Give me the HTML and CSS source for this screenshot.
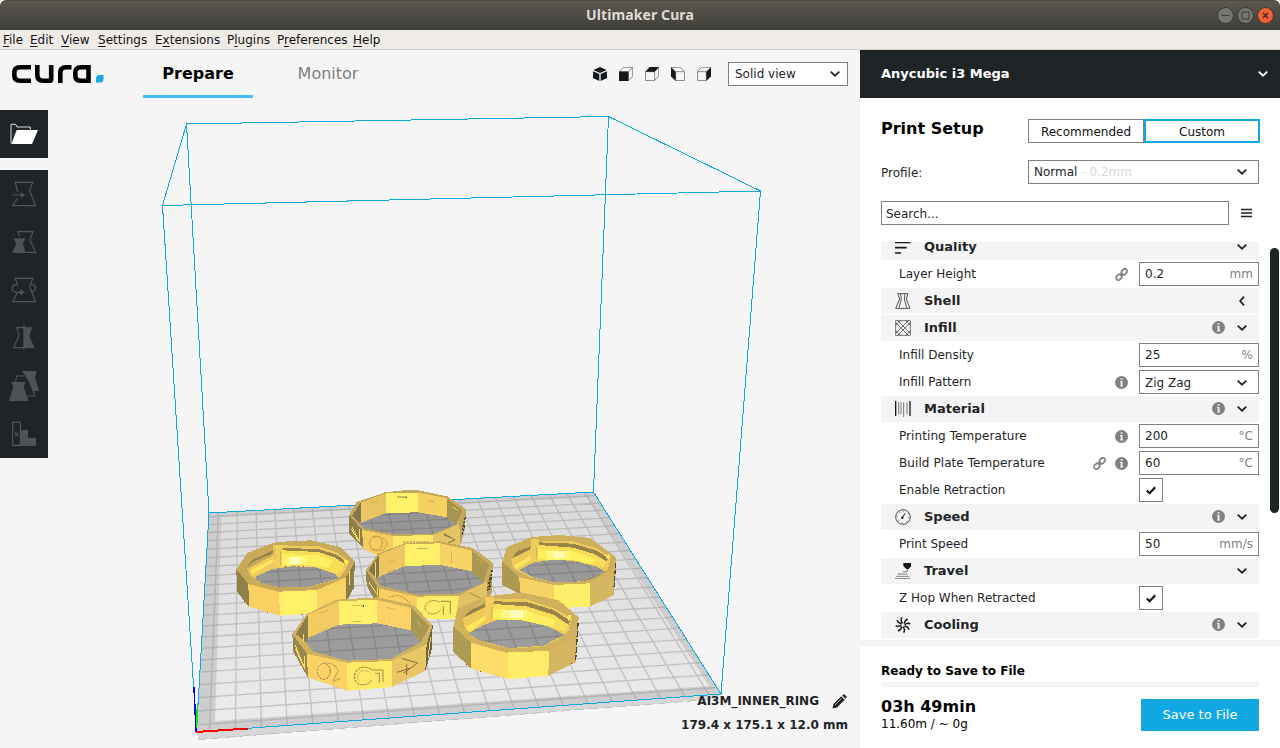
FILE: index.html
```html
<!DOCTYPE html>
<html lang="en">
<head>
<meta charset="utf-8">
<title>Ultimaker Cura</title>
<link rel="stylesheet" href="styles.css">
</head>
<body>
<svg class="defs" width="0" height="0">
  <symbol id="down" viewBox="0 0 10 6"><path d="M.7 .7 5 4.7 9.3 .7" fill="none" stroke="currentColor" stroke-width="1.8"/></symbol>
  <symbol id="left" viewBox="0 0 6 10"><path d="M5 .7 1.2 5 5 9.3" fill="none" stroke="currentColor" stroke-width="1.8"/></symbol>
  <symbol id="info" viewBox="0 0 13 13"><circle cx="6.5" cy="6.5" r="6.5" fill="#808080"/><path d="M5.600 2.200h1.900v1.600H5.600zM5 5h2.500v4.500h.7v1H5v-1h.7V6H5z" fill="#f4f4f4"/></symbol>
  <symbol id="link" viewBox="0 0 13 13"><g fill="none" stroke="#808080" stroke-width="1.700"><rect x="-3.200" y="-2.300" width="6.400" height="4.600" rx="2.300" transform="translate(4 9.200) rotate(-45)"/><rect x="-3.200" y="-2.300" width="6.400" height="4.600" rx="2.300" transform="translate(9.200 3.800) rotate(-45)"/><path d="M5 8 8 5"/></g></symbol>
  <symbol id="check" viewBox="0 0 10 9"><path d="M.8 4.600 3.600 7.200 9.200 1.200" fill="none" stroke="#111517" stroke-width="2.100"/></symbol>
</svg>
<div class="window">
  <header class="titlebar">
    <h1>Ultimaker Cura</h1>
    <div class="controls">
      <svg width="17" height="17" viewBox="0 0 17 17"><circle cx="8.500" cy="8.500" r="8" fill="#767570" stroke="#363530"/><path d="M4.500 8.500h8" stroke="#3c3b37"/></svg>
      <svg width="17" height="17" viewBox="0 0 17 17"><circle cx="8.500" cy="8.500" r="8" fill="#767570" stroke="#363530"/><path d="M5 5h7v7H5z" fill="none" stroke="#3c3b37"/></svg>
      <svg width="17" height="17" viewBox="0 0 17 17"><circle cx="8.500" cy="8.500" r="8" fill="#ee6038" stroke="#45352d"/><path d="m6 6 5 5m0-5-5 5" stroke="#3c2a22" stroke-width="1.400"/></svg>
    </div>
  </header>
  <nav class="menubar">
    <span><u>F</u>ile</span><span><u>E</u>dit</span><span><u>V</u>iew</span><span><u>S</u>ettings</span><span>E<u>x</u>tensions</span><span>P<u>l</u>ugins</span><span>P<u>r</u>eferences</span><span><u>H</u>elp</span>
  </nav>
  <div class="body">
    <main class="stage">
      <svg class="scene" width="860" height="698" viewBox="0 50 860 698">
        <g shape-rendering="crispEdges">
          <path d="M196.500 732 198.500 740 716 699 721 694Z" fill="#d7d7d7"/>
          <path d="M198.500 739.500 716 699" stroke="#c2c2c2" stroke-dasharray="9 5" fill="none"/>
          <path d="M209 513 593 492 721 694 196 732Z" fill="#cdcdcd"/>
        </g>
        <linearGradient id="plate" x1="0" y1="0" x2="0" y2="1"><stop offset="0" stop-color="#dadada"/><stop offset="1" stop-color="#ebebeb"/></linearGradient>
        <path d="M221.500 517 587 497.500 709 686 215 721Z" fill="url(#plate)"/>
        <g id="grid" fill="none" stroke="#8a8a8a" stroke-opacity=".4" stroke-width="1.300"></g>
        <path d="M186.500 124 608.500 116.500 760.500 191 162.500 205.500ZM196.500 732 162.500 205.500M721 694 760.500 191M593.500 492 608.500 116.500M209 513 186.500 124M209 513 593.500 492 721 694 196.500 732Z" fill="none" stroke="#0ea7e0" shape-rendering="crispEdges"/>
        <g shape-rendering="crispEdges" stroke-width="2"><path d="M196 732 194 687" stroke="#00f" stroke-width="1.500"/><path d="M196.500 728 197.500 703" stroke="#0e0" stroke-width="1.500"/><path d="M196 732 248 728.500" stroke="#f00"/></g>

        <!-- back ring -->
        <g transform="translate(340 480) scale(.33333)" shape-rendering="crispEdges">
          <path fill-rule="evenodd" d="M28 105 50 66 135 37 190 31 235 31 322 49 378 88 358 135 280 168 160 169 66 150ZM54 126 64 128 138 99 235 97 320 112 348 134 280 161 160 162 72 145Z" fill="#c5a859"/>
          <path d="M54 126 64 128 138 99 235 97 320 112 348 134 280 161 160 162 72 145Z" class="shade"/>
          <path d="M36 108 62 68 64 126 52 124Z" fill="#85774c"/>
          <path d="M62 68 138 40V99L64 128Z" fill="#e9c460"/>
          <path d="M138 40 235 38V97L138 99Z" fill="#fff269"/>
          <path d="M235 38 320 54V112L235 97Z" fill="#f5d164"/>
          <path d="M320 54 368 93 348 133 320 112Z" fill="#a69452"/>
          <path d="M28 105 66 150 70 205 28 160Z" fill="#8c7d4b"/>
          <path d="M66 150 160 168V225H108L70 206Z" fill="#f6cd60"/>
          <path d="M160 168 280 165V225H160Z" fill="#ffe968"/>
          <path d="M280 165 358 132 362 195 280 215Z" fill="#e5c464"/>
          <path d="M358 132 378 88 374 150 362 195Z" fill="#bda25a"/>
          <path d="m36 140 22 45V148M34 148l22 36" stroke="#f6db65" stroke-width="3" fill="none"/>
          <path d="m376 112-10 42m8-18-8 30" stroke="#514930" stroke-width="4" stroke-dasharray="7 4" fill="none"/>
          <path d="M92 69 110 63M170 51h32M264 62l21 5M338 81l17 11" stroke="#d6b559" stroke-width="4" fill="none"/>
          <g shape-rendering="auto" fill="none" stroke="#c9a24f" stroke-width="3"><ellipse cx="108" cy="189" rx="19" ry="21" stroke="#8d7940" stroke-dasharray="4 3"/><path d="M100 172q30-8 43 20l-14 20M92 205q16 12 36 4"/><path d="m310 160 35 20-20 8M312 165l22 8" stroke="#84703e"/><path d="M190 186h75" stroke="#7d6c3a" stroke-dasharray="5 5"/></g>
          <path d="M199 50v4M291 108v3" stroke="#533" stroke-width="3"/>
        </g>

        <!-- left ring -->
        <g transform="translate(225 480) scale(.33333)" shape-rendering="crispEdges">
          <path fill-rule="evenodd" d="M34 268 68 218 153 186 258 181 345 201 390 245 363 300 277 335 162 338 70 316ZM88 292 140 268 200 259 270 262 330 281 340 296 250 320 160 321 108 308Z" fill="#c8aa5a"/>
          <path fill-rule="evenodd" d="M66 265 82 240 145 210V197H172L280 199 335 218 372 245 358 277 338 298 250 320 160 322 108 308 76 285ZM88 292 140 268 200 259 270 262 330 281 340 296 250 320 160 321 108 308Z" fill="#f0ca5c"/>
          <path d="M66 262 82 240 145 210V221L80 250ZM172 204 280 207 335 224 366 246 360 252 330 233 280 216 172 211Z" fill="#99844a"/>
          <path d="M172 196 280 199 335 217V224L280 207 172 204Z" fill="#edcb5c"/>
          <path d="M66 264 80 248 145 219V225L70 266Z" fill="#c7a857"/>
          <path d="M172 211 280 216 330 233 358 252 352 272 335 282 270 262 200 256 172 260Z" fill="#f6df57"/>
          <path d="M172 222 280 226 325 244 310 264 245 254 172 258Z" fill="#fff05e"/>
          <path d="M182 230h60v24h-60Z" fill="#fff67c"/><path d="M196 230h30v22h-30Z" fill="#fffcb4"/>
          <path d="M77 270 145 236V245L82 284Z" fill="#ffe65c"/>
          <path d="M148 195h26v12l-8 10 4 45h-20Z" fill="#f0cf5d"/><path d="M148 205v22M168 216v38" stroke="#d9b455" stroke-width="3"/>
          <path d="M88 292 140 268 200 259 270 262 330 281 340 296 250 320 160 321 108 308Z" class="shade"/>
          <path d="m356 242 14-4v12l-10 5Z" fill="#ffeb60"/>
          <path d="M34 268 70 312 72 380 36 335Z" fill="#918149"/>
          <path d="M70 312 162 335 165 407 72 380Z" fill="#fbd062"/>
          <path d="M162 335 277 330V400L165 407Z" fill="#fff067"/>
          <path d="M277 330 363 292V380L277 400Z" fill="#fad463"/>
          <path d="M363 292 390 245 386 325 363 368Z" fill="#8d7d49"/>
          <path d="M374 272v44" stroke="#fbe162" stroke-width="3"/>
          <path d="M58 365h3M126 398h4M228 403h4M180 261h3M218 259h4M234 259h4" stroke="#d31616" stroke-width="3"/>
        </g>

        <!-- right ring -->
        <g transform="translate(430 480) scale(.33333)" shape-rendering="crispEdges">
          <path fill-rule="evenodd" d="M217 245 230 202 305 171 390 165 480 174 559 232 550 270 480 314 372 318 268 296ZM266 270 310 248 370 239 430 243 500 260 526 276 480 300 430 306 370 306 310 292Z" fill="#cdaf5c"/>
          <path fill-rule="evenodd" d="M243 238 262 214 310 193 340 182 430 184 500 205 542 234 534 268 500 290 450 305 370 306 300 292 250 265ZM266 270 310 248 370 239 430 243 500 260 526 276 480 300 430 306 370 306 310 292Z" fill="#edc959"/>
          <path d="M243 236 262 214 304 197V207L258 229ZM325 187 430 191 500 212 538 236 530 244 490 221 430 203 325 195Z" fill="#99844a"/>
          <path d="M325 195 430 203 490 221 530 244 522 263 430 240 325 239Z" fill="#f8dc56"/>
          <path d="M325 208 430 214 500 238 490 254 430 241 325 238Z" fill="#fff05e"/><path d="M350 212h66v24h-66Z" fill="#fff67c"/><path d="M370 213h32v22h-32Z" fill="#fffcb4"/>
          <path d="M252 255 304 226V238L262 267Z" fill="#ffe35a"/><path d="M302 177h26v15l-8 10 2 40h-18Z" fill="#efcc5c"/><path d="M302 188v20M321 202v34" stroke="#d9b455" stroke-width="3"/>
          <path d="M266 270 310 248 370 239 430 243 500 260 526 276 480 300 430 306 370 306 310 292Z" class="shade"/>
          <path d="m526 226 12-4 4 12-10 4Z" fill="#ffeb60"/>
          <path d="M217 245 268 292 270 342 217 315Z" fill="#ab9851"/>
          <path d="M268 292 372 315V380L270 345Z" fill="#f7d366"/>
          <path d="M372 315 480 310V380L390 384 372 378Z" fill="#ffee69"/>
          <path d="M480 310 550 265 559 232 552 345 480 380Z" fill="#d5b660"/>
          <path d="M557 250 552 325" stroke="#514930" stroke-width="4" stroke-dasharray="14 5"/>
        </g>

        <!-- middle ring -->
        <g transform="translate(340 480) scale(.33333)" shape-rendering="crispEdges">
          <path fill-rule="evenodd" d="M78 270 115 220 197 189 300 184 398 204 458 248 440 308 358 350 232 352 116 328ZM106 295 118 290 195 258 300 255 396 274 430 309 355 341 235 344 124 318Z" fill="#c9ab5b"/>
          <path d="M106 295 118 290 195 258 300 255 396 274 430 309 355 341 235 344 124 318Z" class="shade"/>
          <path d="M86 270 118 224V288L108 294Z" fill="#85774c"/>
          <path d="M118 224 195 193V258L118 290Z" fill="#eec761"/>
          <path d="M195 193 300 190V255L195 258Z" fill="#fff06a"/>
          <path d="M300 190 396 212V274L300 255Z" fill="#f7d366"/>
          <path d="M396 212 448 255 430 308 396 274Z" fill="#aa9753"/>
          <path d="M78 270 116 325 122 390 80 318Z" fill="#968650"/>
          <path d="M116 325 232 350V412L118 390Z" fill="#fad063"/>
          <path d="M232 350 358 347 345 416 285 418 232 412Z" fill="#ffec68"/>
          <path d="M358 347 440 305 454 335 440 370 345 416Z" fill="#e3c263"/>
          <path d="M440 305 458 248 456 335 440 370Z" fill="#bda25a"/>
          <path d="m456 270-8 60m2-35-8 40" stroke="#514930" stroke-width="5" stroke-dasharray="7 4" fill="none"/>
          <path d="m86 305 28 42V322M106 245v50" stroke="#f6db65" stroke-width="3" fill="none"/>
          <path d="M143 247 166 239M143 276l23-9M230 207h34M334 220v30M410 236l22 15" stroke="#d3b055" stroke-width="3" fill="none"/>
          <g shape-rendering="auto" fill="none" stroke="#a08744" stroke-width="3"><path d="M298 366q-17-9-34 1-18 17 1 32 20 8 36-8" stroke="#82703f" stroke-dasharray="6 3"/><path d="M303 364h28v38M310 378v26"/><path d="M148 352q24-10 40 0l22 16" stroke-dasharray="5 3"/><path d="m388 338 34 17"/></g>
        </g>

        <!-- front left ring -->
        <g transform="translate(225 480) scale(.33333)" shape-rendering="crispEdges">
          <path fill-rule="evenodd" d="M202 462 245 402 335 359 460 352 565 375 623 435 605 496 500 546 365 551 247 525ZM243 486 249 474 342 434 456 430 558 451 586 487 497 537 367 542 262 514Z" fill="#d1b15e"/>
          <path d="M243 486 249 474 342 434 456 430 558 451 586 487 497 537 367 542 262 514Z" class="shade"/>
          <path d="M212 462 249 405V474L243 486Z" fill="#8d7d4b"/>
          <path d="M249 405 342 363V434L249 474Z" fill="#f2cb62"/>
          <path d="M342 363 456 360V430L342 434Z" fill="#fff16b"/>
          <path d="M456 360 558 384V451L456 430Z" fill="#fad267"/>
          <path d="M558 384 614 437 588 487 558 451Z" fill="#a99651"/>
          <path d="M202 462 247 522 248 592 205 515Z" fill="#98874e"/>
          <path d="M247 522 365 548 368 632 248 592Z" fill="#fcd265"/>
          <path d="M365 548 500 543 502 621 368 632Z" fill="#ffea68"/>
          <path d="M500 543 605 493 601 572 502 621Z" fill="#e8c764"/>
          <path d="M605 493 623 435 620 510 601 572Z" fill="#6e6342"/>
          <path d="m210 495 30 72V528M211 506l27 58M236 462v24M617 470l-8 65" stroke="#f6db65" stroke-width="3" fill="none"/>
          <path d="M282 402l26-11M282 456l26-12M382 376h34M384 424h24M482 382l28 6M493 410v8M576 424l14 16" stroke="#d9b556" stroke-width="3" fill="none"/>
          <path d="M415 375v6" stroke="#443a25" stroke-width="3"/>
          <g shape-rendering="auto" fill="none" stroke="#a48b47" stroke-width="3"><ellipse cx="296" cy="574" rx="20" ry="24" stroke="#8b773f" stroke-dasharray="7 3"/><ellipse cx="298" cy="575" rx="26" ry="28" stroke="#ffe579"/><path d="M290 550q38-7 50 22l-16 32 22-8" stroke="#c09c49"/><path d="M438 568q-22-14-42 2-18 26 4 42 26 8 40-12" stroke="#85713b" stroke-dasharray="8 3"/><path d="M433 576q-20-9-32 2-9 19 4 27" stroke="#d9b653"/><path d="M439 570h35v36M450 580h13v28"/><path d="m530 535 48 14-42 30M545 553v32M516 577l38-12" stroke="#806e3d"/></g>
        </g>

        <!-- front right ring -->
        <g transform="translate(430 480) scale(.33333)" shape-rendering="crispEdges">
          <path fill-rule="evenodd" d="M70 440 85 385 165 350 275 337 387 361 446 412 437 474 357 517 235 523 123 492ZM116 460 160 435 200 421 270 420 350 438 404 464 340 497 240 504 150 481Z" fill="#d1b15e"/>
          <path fill-rule="evenodd" d="M98 418 115 395 166 370V358H192L290 358 370 384 424 415 415 455 385 478 340 499 250 506 180 492 130 470 106 445ZM116 460 160 435 200 421 270 420 350 438 404 464 340 497 240 504 150 481Z" fill="#efca5b"/>
          <path d="M100 414 118 392 166 371V381L112 408ZM190 364 290 366 370 390 420 422 416 434 370 404 290 379 190 372Z" fill="#99844a"/>
          <path d="M190 372 290 379 370 404 416 434 406 455 350 438 270 420 190 420Z" fill="#f9dc57"/>
          <path d="M190 387 290 392 375 420 370 440 270 419 190 418Z" fill="#fff05f"/><path d="M214 390h76v25h-76Z" fill="#fff77f"/><path d="M240 391h38v22h-38Z" fill="#fffcc0"/>
          <path d="M108 440 166 407V420L120 455Z" fill="#ffe65b"/><path d="M166 350h26v18l-8 10 6 42h-24Z" fill="#f3cf5f"/><path d="M166 362v22M186 380v36" stroke="#d9b455" stroke-width="3"/>
          <path d="M116 460 160 435 200 421 270 420 350 438 404 464 340 497 240 504 150 481Z" class="shade"/>
          <path d="m410 408 14-4v16l-10 2Z" fill="#ffeb60"/>
          <path d="M70 440 123 488V566L70 515Z" fill="#ad9a53"/>
          <path d="M123 488 235 520V597L123 566Z" fill="#ffdc67"/>
          <path d="M235 517 357 513 355 587 250 597H235Z" fill="#ffed69"/>
          <path d="M357 513 437 470 446 412 437 547 355 587Z" fill="#d5b560"/>
          <path d="M444 430 437 540" stroke="#514930" stroke-width="4" stroke-dasharray="18 6"/>
          <path d="M108 553h4M150 574h4M423 550h4" stroke="#d31616" stroke-width="4"/>
        </g>
      </svg>

      <div class="topbar">
        <svg class="logo" width="92" height="20" viewBox="0 0 92 20"><g fill="none" stroke="#000" stroke-width="4.600"><path d="M19 3.300H8Q2.300 3.300 2.300 8.500v2.500q0 5.700 5.700 5.700h11"/><path d="M25.300 1v10q0 5.700 5.700 5.700h7Q39.200 16.700 39.200 15V1" /><path d="M48.300 19V9q0-5.700 5.700-5.700h5.500"/><path d="M76.500 19V3.300H69q-5.700 0-5.700 5.200v3q0 5.200 5 5.200h8"/></g><path d="M84 18.500V14.500q0-3.500 3.500-3.500H91.500V15q0 3.500-3.500 3.500Z" fill="#1ba6df"/></svg>
        <div class="tab active">Prepare</div>
        <div class="tab">Monitor</div>
        <div class="views">
          <svg viewBox="0 0 42 42"><path d="M21 0 41 9 21 18 1 9ZM0 13 19 21V42L0 33ZM42 13 23 21V42L42 33Z" fill="#15191b"/></svg>
          <svg viewBox="0 0 42 42"><path d="M1 14 14 1H41V28L29 41M29 14 41 1" fill="none" stroke="#777" stroke-width="2.500"/><path d="M0 13H29V42H0Z" fill="#15191b"/></svg>
          <svg viewBox="0 0 42 42"><path d="M1.500 14H29V40.500H1.500ZM29 14 41 1V28L29 40" fill="none" stroke="#777" stroke-width="2.500"/><path d="M1 14 14 0H42L29 14Z" fill="#15191b"/></svg>
          <svg viewBox="0 0 42 42"><path d="M14 14H40.500V40.500H14ZM1 1H28L40 14" fill="none" stroke="#777" stroke-width="2.500"/><path d="M0 0 14 14V42L0 28Z" fill="#15191b"/></svg>
          <svg viewBox="0 0 42 42"><path d="M1.500 14H28V40.500H1.500ZM1 14 14 1H42" fill="none" stroke="#777" stroke-width="2.500"/><path d="M42 0 28 14V42L42 28Z" fill="#15191b"/></svg>
        </div>
        <div class="select viewmode"><span>Solid view</span><svg class="chev"><use href="#down"/></svg></div>
      </div>

      <div class="tools">
        <div class="tool open"><svg viewBox="0 0 144 144"><path d="M33 100V43H47L51 51H91V60" fill="none" stroke="#ddd" stroke-width="3"/><path d="M50 60H114L96 102H34Z" fill="#fff"/></svg></div>
        <div class="toolset">
          <div class="tool"><svg viewBox="0 0 144 144"><path d="M53 66 46 37H98L89 62 107 107H38L53 84M37 75H65" class="ln"/><path d="M62 66 76 75 62 84Z" class="fl"/></svg></div>
          <div class="tool"><svg viewBox="0 0 144 144"><path d="M59 55 53 41H99L90 66 107 103H76" class="ln"/><path d="M41 61H76L69 77 77 105H36L49 77Z" class="fl"/></svg></div>
          <div class="tool"><svg viewBox="0 0 144 144"><path d="M53 59 46 37H98L89 62 107 107H38L53 78M52 55C31 55 31 78 49 79H63M91 55C112 53 112 77 92 77" class="ln"/><path d="M60 70 76 79 60 88Z" class="fl"/></svg></div>
          <div class="tool"><svg viewBox="0 0 144 144"><path d="M72 41H50L57 64 41 101H72M72 32V108" class="ln"/><path d="M72 40H97L88 66 104 103H72Z" class="fl"/></svg></div>
          <div class="tool"><svg viewBox="0 0 144 144"><path d="M47 60 50 42H72M82 102H104L99 83" class="ln"/><path d="M66 27H110L105 47 117 87H98L86 58ZM33 60H77L71 75 86 117H27L40 75Z" class="fl"/></svg></div>
          <div class="tool"><svg viewBox="0 0 144 144"><path d="M38 37H61V106H38ZM44 67 55 79M55 67 44 79" class="ln"/><path d="M62 60H84V84H108V108H62Z" class="fl"/></svg></div>
        </div>
      </div>

      <div class="jobinfo">
        <div class="jobname"><span>AI3M_INNER_RING</span><svg width="15" height="15" viewBox="0 0 15 15"><path d="M.5 14.500 1.500 10 9.200 2.300 12.700 5.800 5 13.500ZM10.200 1.500 11.500.400Q12 0 12.500.400L14.600 2.500Q15 3 14.500 3.500L13.500 4.800Z" fill="#1f2427"/><path d="m3 11 6.500-6.500" stroke="#f5f5f5" stroke-width=".7"/></svg></div>
        <div>179.4 x 175.1 x 12.0 mm</div>
      </div>
    </main>

    <aside class="side">
      <div class="machine"><span>Anycubic i3 Mega</span><svg class="chev"><use href="#down"/></svg></div>
      <div class="setup"><h2>Print Setup</h2><div class="modes"><span>Recommended</span><span class="on">Custom</span></div></div>
      <div class="profile"><span>Profile:</span><div class="select"><span>Normal <i>- 0.2mm</i></span><svg class="chev"><use href="#down"/></svg></div></div>
      <div class="find"><div class="field">Search...</div><svg width="11" height="10" viewBox="0 0 11 10"><path d="M0 1.500H11M0 5H11M0 8.500H11" stroke="#1f2427" stroke-width="1.700"/></svg></div>

      <div class="listwrap">
        <div class="list">
          <div class="cat"><svg class="ic" viewBox="0 0 48 48"><path d="M0 10H46M0 26H35M0 42H18" stroke="#15191b" stroke-width="5"/></svg><b>Quality</b><svg class="chev"><use href="#down"/></svg></div>
          <div class="row"><span>Layer Height</span><svg class="mark"><use href="#link"/></svg><div class="val">0.2<em>mm</em></div></div>
          <div class="cat"><svg class="ic" viewBox="0 0 48 48"><path d="M8 2H39L34 18 45 46H2L14 18ZM17 2 19 18 12 44M30 2 28 18 35 44" fill="none" stroke="#333" stroke-width="2.500"/></svg><b>Shell</b><svg class="chev side-chev"><use href="#left"/></svg></div>
          <div class="cat"><svg class="ic" viewBox="0 0 48 48"><path d="M2 2H46V46H2ZM2 16 16 2M2 40 40 2M8 46 46 8M32 46 46 32M2 32 16 46M2 8 40 46M8 2 46 40M32 2 46 16" fill="none" stroke="#444" stroke-width="2.200"/></svg><b>Infill</b><svg class="mark"><use href="#info"/></svg><svg class="chev"><use href="#down"/></svg></div>
          <div class="row"><span>Infill Density</span><div class="val">25<em>%</em></div></div>
          <div class="row"><span>Infill Pattern</span><svg class="mark"><use href="#info"/></svg><div class="val pick">Zig Zag<svg class="chev"><use href="#down"/></svg></div></div>
          <div class="cat"><svg class="ic" viewBox="0 0 48 48"><path d="M2 0V45M45 0V45" stroke="#15191b" stroke-width="4"/><path d="M11 4V40M18 4V40M26 4V48M36 4V40" stroke="#444" stroke-width="2.200"/></svg><b>Material</b><svg class="mark"><use href="#info"/></svg><svg class="chev"><use href="#down"/></svg></div>
          <div class="row wide"><span>Printing Temperature</span><svg class="mark"><use href="#info"/></svg><div class="val">200<em>°C</em></div></div>
          <div class="row wide"><span>Build Plate Temperature</span><svg class="mark"><use href="#link"/></svg><svg class="mark"><use href="#info"/></svg><div class="val">60<em>°C</em></div></div>
          <div class="row"><span>Enable Retraction</span><div class="box"><svg width="10" height="9"><use href="#check"/></svg></div></div>
          <div class="cat"><svg class="ic" viewBox="0 0 48 48"><circle cx="24" cy="24" r="22" fill="none" stroke="#333" stroke-width="2.500"/><circle cx="24" cy="24" r="18" fill="none" stroke="#333" stroke-width="4" stroke-dasharray="1.500 12.600"/><path d="M21 28 30 13" stroke="#15191b" stroke-width="3"/><circle cx="22" cy="26" r="3.500"/></svg><b>Speed</b><svg class="mark"><use href="#info"/></svg><svg class="chev"><use href="#down"/></svg></div>
          <div class="row"><span>Print Speed</span><div class="val">50<em>mm/s</em></div></div>
          <div class="cat"><svg class="ic" viewBox="0 0 48 48"><path d="M25 0H49V9L41 18H34L25 9Z" fill="#15191b"/><path d="M37 18V26H24M8 33H37M4 40H43M0 47H46" stroke="#666" stroke-width="2.500" fill="none"/></svg><b>Travel</b><svg class="chev"><use href="#down"/></svg></div>
          <div class="row"><span>Z Hop When Retracted</span><div class="box"><svg width="10" height="9"><use href="#check"/></svg></div></div>
          <div class="cat"><svg class="ic" viewBox="0 0 48 48"><g fill="none" stroke="#15191b" stroke-width="4.500"><path d="M23 19Q15 11 21 1M28 20Q29 9 38 6M29 24Q38 16 46 21M28 28Q39 28 42 38M24 29Q32 38 26 47M20 28Q19 38 9 42M19 24Q10 31 2 26M20 20Q10 20 6 10"/></g></svg><b>Cooling</b><svg class="mark"><use href="#info"/></svg><svg class="chev"><use href="#down"/></svg></div>
        </div>
        <div class="scroll"></div>
      </div>

      <footer class="save">
        <strong>Ready to Save to File</strong>
        <div class="progress"></div>
        <div class="result"><div><div class="time">03h 49min</div><div>11.60m / ~ 0g</div></div><button>Save to File</button></div>
      </footer>
    </aside>
  </div>
</div>
<script src="grid.js"></script>
</body>
</html>
```
FILE: grid.js
```js
// Build plate corners on screen: origin, x end, far corner, y end.
const [a, b, c, d] = [[196.5, 732], [721, 694], [593.5, 492], [209, 513]];

// Projective map from the unit square to the plate.
const sx = a[0] - b[0] + c[0] - d[0], sy = a[1] - b[1] + c[1] - d[1];
const dx1 = b[0] - c[0], dx2 = d[0] - c[0], dy1 = b[1] - c[1], dy2 = d[1] - c[1];
const det = dx1 * dy2 - dx2 * dy1;
const g = (sx * dy2 - dx2 * sy) / det, h = (dx1 * sy - sx * dy1) / det;
const project = (u, v) => {
  const w = g * u + h * v + 1;
  const x = (b[0] - a[0] + g * b[0]) * u + (d[0] - a[0] + h * d[0]) * v + a[0];
  const y = (b[1] - a[1] + g * b[1]) * u + (d[1] - a[1] + h * d[1]) * v + a[1];
  return (x / w).toFixed(1) + ' ' + (y / w).toFixed(1);
};

// One line every 10 mm on a 210 mm plate, centred.
let path = '';
for (let mm = 5; mm < 210; mm += 10) {
  const t = mm / 210;
  path += `M${project(t, 0)}L${project(t, 1)}M${project(0, t)}L${project(1, t)}`;
}
const line = document.createElementNS('http://www.w3.org/2000/svg', 'path');
line.setAttribute('d', path);
document.getElementById('grid').appendChild(line);
```
FILE: styles.css
```css
* { box-sizing: border-box; }
body { margin: 0; font: 12px/16px "DejaVu Sans", sans-serif; color: #1f2427; background: #fff; }
.defs { position: absolute; }
.window { width: 1280px; height: 748px; display: flex; flex-direction: column; overflow: hidden; }

.titlebar { height: 30px; flex: none; display: grid; grid-template-columns: 1fr auto 1fr; align-items: center; border-radius: 6px 6px 0 0; background: linear-gradient(#5b5850, #3f3e39); border-top: 1px solid #4b4944; }
.titlebar h1 { grid-column: 2; margin: 0; padding-bottom: 2px; font: bold 14px/20px "Noto Sans", sans-serif; letter-spacing: .1px; color: #dfdbd2; }
.controls { display: flex; gap: 3px; justify-content: flex-end; padding: 0 6px 1px 0; }

.menubar { height: 20px; flex: none; display: grid; grid-template-columns: 27px 31px 37px 57px 72px 50px 76px auto; padding: 2px 3px 0; background: #efebe7; border-bottom: 1px solid #d3cfcc; color: #111; }
.menubar u { text-underline-offset: 2px; text-decoration-thickness: 1px; }

.body { flex: 1; display: flex; min-height: 0; }
.stage { position: relative; width: 860px; display: flex; flex-direction: column; background: #f5f5f5; }
.scene { position: absolute; left: 0; top: 0; }
.shade { fill: #383838; fill-opacity: .42; }
.topbar, .tools, .jobinfo { position: relative; }

.topbar { height: 48px; flex: none; display: flex; }
.logo { margin: 14px 39px 0 12px; }
.tab { width: 110px; margin-right: 20px; text-align: center; font-size: 16px; line-height: 48px; color: #808080; }
.tab.active { font-weight: bold; color: #000; border-bottom: 3px solid #45bcfc; }
.views { display: flex; gap: 12px; margin: 17px 17px 0 auto; }
.views svg { width: 14px; height: 14px; }
.select { height: 24px; border: 1px solid #808080; background: #fff; display: flex; align-items: center; justify-content: space-between; }
.chev { width: 10px; height: 6px; flex: none; color: #1f2427; }
.viewmode { width: 120px; margin: 12px 12px 0 0; padding: 0 7px 0 6px; }

.tools { width: 48px; margin-top: 12px; display: flex; flex-direction: column; gap: 12px; }
.tool { width: 48px; height: 48px; background: #1f2427; }
.tool svg { display: block; width: 48px; height: 48px; }
.ln { fill: none; stroke: #51575b; stroke-width: 3.4; }
.fl { fill: #4c5256; }

.jobinfo { margin: auto 12px 14px 0; text-align: right; font-weight: bold; line-height: 17px; }
.jobname { display: flex; justify-content: flex-end; align-items: center; gap: 13px; margin-bottom: 7px; padding-right: 1px; }

.side { width: 420px; display: flex; flex-direction: column; background: #fff; }
.machine { height: 48px; flex: none; padding: 0 12px 0 21px; display: flex; align-items: center; justify-content: space-between; background: #1f2427; color: #fff; font-weight: bold; font-size: 13px; }
.machine .chev { color: #fff; }
.setup { display: flex; justify-content: space-between; padding: 21px 20px 0 21px; height: 45px; }
.setup h2 { margin: 0; font-size: 16px; line-height: 20px; color: #000; }
.modes { display: flex; width: 232px; height: 24px; text-align: center; line-height: 24px; color: #111; }
.modes span { width: 116px; border: 1px solid #808080; }
.modes .on { border: 2px solid #0fa8e2; line-height: 22px; }
.profile { display: flex; justify-content: space-between; align-items: center; height: 24px; margin: 17px 21px 0; }
.profile > span { padding-top: 2px; }
.profile .select { width: 231px; padding: 0 11px 0 5px; }
.profile i { font-style: normal; color: #d8d8d8; }
.find { display: flex; align-items: center; gap: 12px; margin: 17px 20px 0 21px; }
.field { width: 348px; height: 24px; padding-left: 4px; border: 1px solid #808080; line-height: 24px; }

.listwrap { display: flex; justify-content: space-between; height: 398px; margin-top: 17px; overflow: hidden; }
.list { width: 378px; margin: -8px 0 0 21px; }
.cat { display: flex; align-items: center; height: 26px; margin-bottom: 1px; padding: 0 12px 0 14px; background: #f4f4f4; font-size: 13px; }
.cat b { margin: 0 auto 0 13px; }
.ic { width: 16px; height: 16px; }
.mark { width: 13px; height: 13px; flex: none; }
.cat .mark { margin: 0 12px 1px 0; }
.side-chev { width: 6px; height: 10px; margin-right: 2px; }
.row { display: flex; align-items: center; height: 27px; padding: 0 0 1px 18px; }
.row > span { margin-right: auto; }
.wide > span { letter-spacing: .08px; }
.row .mark { margin-right: 11px; }
.row .mark + .mark { margin-left: -2px; }
.val { display: flex; justify-content: space-between; align-items: center; width: 120px; height: 24px; padding: 0 5px; border: 1px solid #808080; }
.val em { font-style: normal; color: #808080; }
.pick { padding: 1px 11px 0 5px; }
.box { width: 24px; height: 24px; margin-right: 96px; padding: 7px 6px; border: 1px solid #808080; }
.box svg { display: block; }
.scroll { width: 9px; height: 265px; margin: 6px 1px 0 0; border-radius: 5px; background: #1f2427; }

.save { flex: 1; border-top: 6px solid #f4f4f4; padding: 16px 21px 0; color: #000; }
.save strong { display: block; line-height: 18px; }
.progress { height: 5px; margin-top: 2px; background: #f4f4f4; }
.result { display: flex; justify-content: space-between; padding-top: 12px; line-height: 15px; }
.time { font-weight: bold; font-size: 16px; line-height: 20px; margin-top: -2px; }
button { width: 118px; height: 32px; padding: 0 0 2px; border: 0; background: #0fa8e2; color: #fff; font: 13px "DejaVu Sans", sans-serif; }
```
